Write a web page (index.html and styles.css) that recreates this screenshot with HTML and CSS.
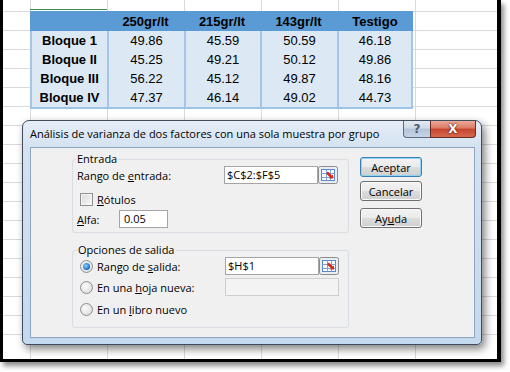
FILE: index.html
```html
<!DOCTYPE html>
<html lang="es">
<head>
    <meta charset="UTF-8">
    <title>Análisis de varianza</title>
    <link rel="stylesheet" href="styles.css">
</head>
<body>
    <div class="frame">
        <div class="top-strip"><span class="sel-line"></span></div>
        <div class="table">
            <div class="cell head"></div>
            <div class="cell head">250gr/lt</div>
            <div class="cell head">215gr/lt</div>
            <div class="cell head">143gr/lt</div>
            <div class="cell head">Testigo</div>

            <div class="cell body label">Bloque 1</div>
            <div class="cell body">49.86</div>
            <div class="cell body">45.59</div>
            <div class="cell body">50.59</div>
            <div class="cell body last">46.18</div>

            <div class="cell body label">Bloque II</div>
            <div class="cell body">45.25</div>
            <div class="cell body">49.21</div>
            <div class="cell body">50.12</div>
            <div class="cell body last">49.86</div>

            <div class="cell body label">Bloque III</div>
            <div class="cell body">56.22</div>
            <div class="cell body">45.12</div>
            <div class="cell body">49.87</div>
            <div class="cell body last">48.16</div>

            <div class="cell body label">Bloque IV</div>
            <div class="cell body">47.37</div>
            <div class="cell body">46.14</div>
            <div class="cell body">49.02</div>
            <div class="cell body last">44.73</div>
        </div>

        <!-- ventana del asistente, encima de la hoja -->
        <div class="dialog">
            <div class="titlebar">
                <span class="title">Análisis de varianza de dos factores con una sola muestra por grupo</span>
                <div class="caps">
                    <span class="cap help">?</span>
                    <span class="cap close">X</span>
                </div>
            </div>
            <div class="client">
                <div class="groups">
                    <fieldset class="group entrada">
                        <legend>Entrada</legend>
                        <div class="row r1">
                            <span class="lbl">Rango de <u>e</u>ntrada:</span>
                            <span class="field">$C$2:$F$5</span>
                            <svg class="pick" width="20" height="18" viewBox="0 0 20 18">
                                <rect x="0.5" y="0.5" width="19" height="17" rx="2" fill="#e9eef5" stroke="#8c8c8c"/>
                                <rect x="3.5" y="3.5" width="13" height="11" fill="#fdfdfd" stroke="#5a86c4"/>
                                <path d="M3.5 7.5h13M3.5 11.5h13M8.5 3.5v11M12.5 3.5v11" stroke="#7ea3d6"/>
                                <path d="M9 6.5l4.5 4.5" stroke="#d62b16" stroke-width="2.6"/>
                                <path d="M11 12.5h4v-4z" fill="#d62b16"/>
                            </svg>
                        </div>
                        <div class="row r2">
                            <span class="check"></span>
                            <span><u>R</u>ótulos</span>
                        </div>
                        <div class="row r3">
                            <span class="lbl alfa-lbl"><u>A</u>lfa:</span>
                            <span class="field alfa">0.05</span>
                        </div>
                    </fieldset>

                    <fieldset class="group salida">
                        <legend>Opciones de salida</legend>
                        <div class="row s1">
                            <span class="radio on"></span>
                            <span class="lbl opt">Rango de <u>s</u>alida:</span>
                            <span class="field">$H$1</span>
                            <svg class="pick" width="20" height="18" viewBox="0 0 20 18">
                                <rect x="0.5" y="0.5" width="19" height="17" rx="2" fill="#e9eef5" stroke="#8c8c8c"/>
                                <rect x="3.5" y="3.5" width="13" height="11" fill="#fdfdfd" stroke="#5a86c4"/>
                                <path d="M3.5 7.5h13M3.5 11.5h13M8.5 3.5v11M12.5 3.5v11" stroke="#7ea3d6"/>
                                <path d="M9 6.5l4.5 4.5" stroke="#d62b16" stroke-width="2.6"/>
                                <path d="M11 12.5h4v-4z" fill="#d62b16"/>
                            </svg>
                        </div>
                        <div class="row s2">
                            <span class="radio"></span>
                            <span class="lbl opt">En una <u>h</u>oja nueva:</span>
                            <span class="field off"></span>
                        </div>
                        <div class="row s3">
                            <span class="radio"></span>
                            <span class="lbl">En un <u>l</u>ibro nuevo</span>
                        </div>
                    </fieldset>
                </div>
                <div class="buttons">
                    <span class="btn default">Aceptar</span>
                    <span class="btn">Cancelar</span>
                    <span class="btn help-btn">Ay<u>u</u>da</span>
                </div>
            </div>
        </div>
    </div>
</body>
</html>
```

FILE: styles.css
```css
* {
box-sizing: border-box;
}

body {
margin: 0;
width: 510px;
height: 372px;
overflow: hidden;
background: #fff;
font-family: "Liberation Sans", Arial, sans-serif;
}

/* hoja de excel con su marco negro */
.frame {
position: relative;
width: 501px;
height: 362px;
border-left: 3px solid #000;
border-right: 4px solid #000;
border-bottom: 3px solid #000;
box-shadow: 3px 4px 5px rgba(0, 0, 0, 0.45);
overflow: hidden;
background-color: #fff;
background-image:
    repeating-linear-gradient(to right, transparent 0 76px, #dadada 76px 77px),
    repeating-linear-gradient(to bottom, transparent 0 18px, #dadada 18px 19px);
background-position: -49px 0, 0 -7px;
}

.top-strip {
height: 11px;
display: flex;
align-items: flex-end;
}

.sel-line {
margin-left: 27px;
width: 77px;
height: 1px;
background: #3f8c52;
margin-bottom: 1px;
}

.table {
margin-left: 27px;
width: 383px;
display: grid;
grid-template-columns: 77px 77px 76px 77px 76px;
grid-template-rows: 20px repeat(4, 19px);
border-bottom: 2px solid #9dc3e6;
font-size: 13px;
color: #000;
}

.cell {
display: flex;
align-items: center;
justify-content: center;
}

.cell.head {
background: #5b9bd5;
font-weight: bold;
}

.cell.body {
background: #dde8f5;
border-left: 2px solid #a3c6e8;
}

.cell.label {
font-weight: bold;
}

.cell.last {
border-right: 2px solid #a3c6e8;
}

/* dialogo */
.dialog {
position: absolute;
left: 19px;
top: 120px;
width: 460px;
height: 225px;
border: 1px solid #3e4c5e;
border-radius: 7px 7px 5px 5px;
background: linear-gradient(#e6eef8, #d4e2f1 26px, #c4d8ee);
box-shadow: 3px 4px 8px rgba(0, 0, 0, 0.5);
display: flex;
flex-direction: column;
font-family: "Open Sans", sans-serif;
font-size: 11px;
color: #000;
}

.titlebar {
height: 26px;
display: flex;
justify-content: space-between;
}

.title {
padding-left: 7px;
line-height: 26px;
white-space: nowrap;
}

.caps {
display: flex;
margin-right: 5px;
align-self: flex-start;
}

.cap {
height: 17px;
display: flex;
align-items: center;
justify-content: center;
border: 1px solid #5d6c80;
border-top: none;
font-family: "DejaVu Sans", sans-serif;
font-weight: bold;
}

.cap.help {
width: 27px;
border-right: none;
border-radius: 0 0 0 4px;
background: linear-gradient(#e3ebf4, #cdd9e7 45%, #b4c5d9 50%, #c6d4e4);
color: #4c5a6c;
font-size: 12px;
}

.cap.close {
width: 46px;
border-radius: 0 0 4px 0;
border-color: #6b2a20;
background: linear-gradient(#eba999, #dd7a64 45%, #c7432d 50%, #d46a50);
color: #fff;
font-size: 12px;
text-shadow: 0 0 2px #4a1208, 0 0 1px #4a1208;
}

.client {
flex: 1;
margin: 0 6px 6px 7px;
border: 1px solid #8fa6c0;
background: #f0f0f0;
display: flex;
gap: 11px;
padding: 5px 0 0 41px;
}

.groups {
width: 277px;
display: flex;
flex-direction: column;
gap: 11px;
}

.group {
margin: 0;
border: 1px solid #d7dde3;
border-radius: 3px;
min-width: 0;
}

.group legend {
line-height: 12px;
padding: 0 1px;
}

.entrada {
padding: 0 0 4px 4px;
}

.entrada legend {
margin-left: -1px;
}

.salida {
padding: 0 0 9px 7px;
}

.salida legend {
margin-left: -3px;
}

.row {
display: flex;
align-items: center;
height: 18px;
}

.r1 {
margin-top: 1px;
}

.r2 {
margin-top: 8px;
height: 14px;
}

.r3 {
margin-top: 4px;
}

.s1 {
margin-top: 1px;
}

.s2 {
margin-top: 3px;
}

.s3 {
margin-top: 4px;
}

.lbl {
width: 147px;
}

.alfa-lbl {
width: 42px;
}

.opt {
width: 128px;
}

.field {
width: 94px;
height: 18px;
border: 1px solid #a5a5a5;
background: #fff;
padding: 0 2px;
line-height: 16px;
}

.field.alfa {
width: 49px;
padding-left: 4px;
}

.field.off {
width: 114px;
background: #f3f3f3;
border-color: #cfcfcf;
}

.check {
width: 13px;
height: 13px;
margin-left: 3px;
margin-right: 4px;
border: 1px solid #8e8f8f;
background: linear-gradient(135deg, #d8d8d8, #fafafa);
box-shadow: inset 0 0 0 1px #f4f4f4;
}

.radio {
width: 13px;
height: 13px;
margin-right: 4px;
border: 1px solid #8e8f8f;
border-radius: 50%;
background: radial-gradient(circle at 40% 40%, #fbfbfb, #d6d6d6);
display: flex;
align-items: center;
justify-content: center;
}

.radio.on::after {
content: "";
width: 7px;
height: 7px;
border-radius: 50%;
background: radial-gradient(circle at 40% 40%, #8fd3ff, #1a6ac1 70%);
}

.buttons {
display: flex;
flex-direction: column;
width: 62px;
padding-top: 4px;
}

.btn {
height: 20px;
margin-bottom: 4px;
display: flex;
align-items: center;
justify-content: center;
border: 1px solid #707070;
border-radius: 3px;
background: linear-gradient(#f2f2f2, #ebebeb 50%, #dddddd 50%, #cfcfcf);
box-shadow: inset 0 0 0 1px #fafafa;
}

.btn.default {
border-color: #3c7fb1;
box-shadow: inset 0 0 0 1px #8fd4f5;
}

.btn.help-btn {
margin-top: 3px;
}
```
